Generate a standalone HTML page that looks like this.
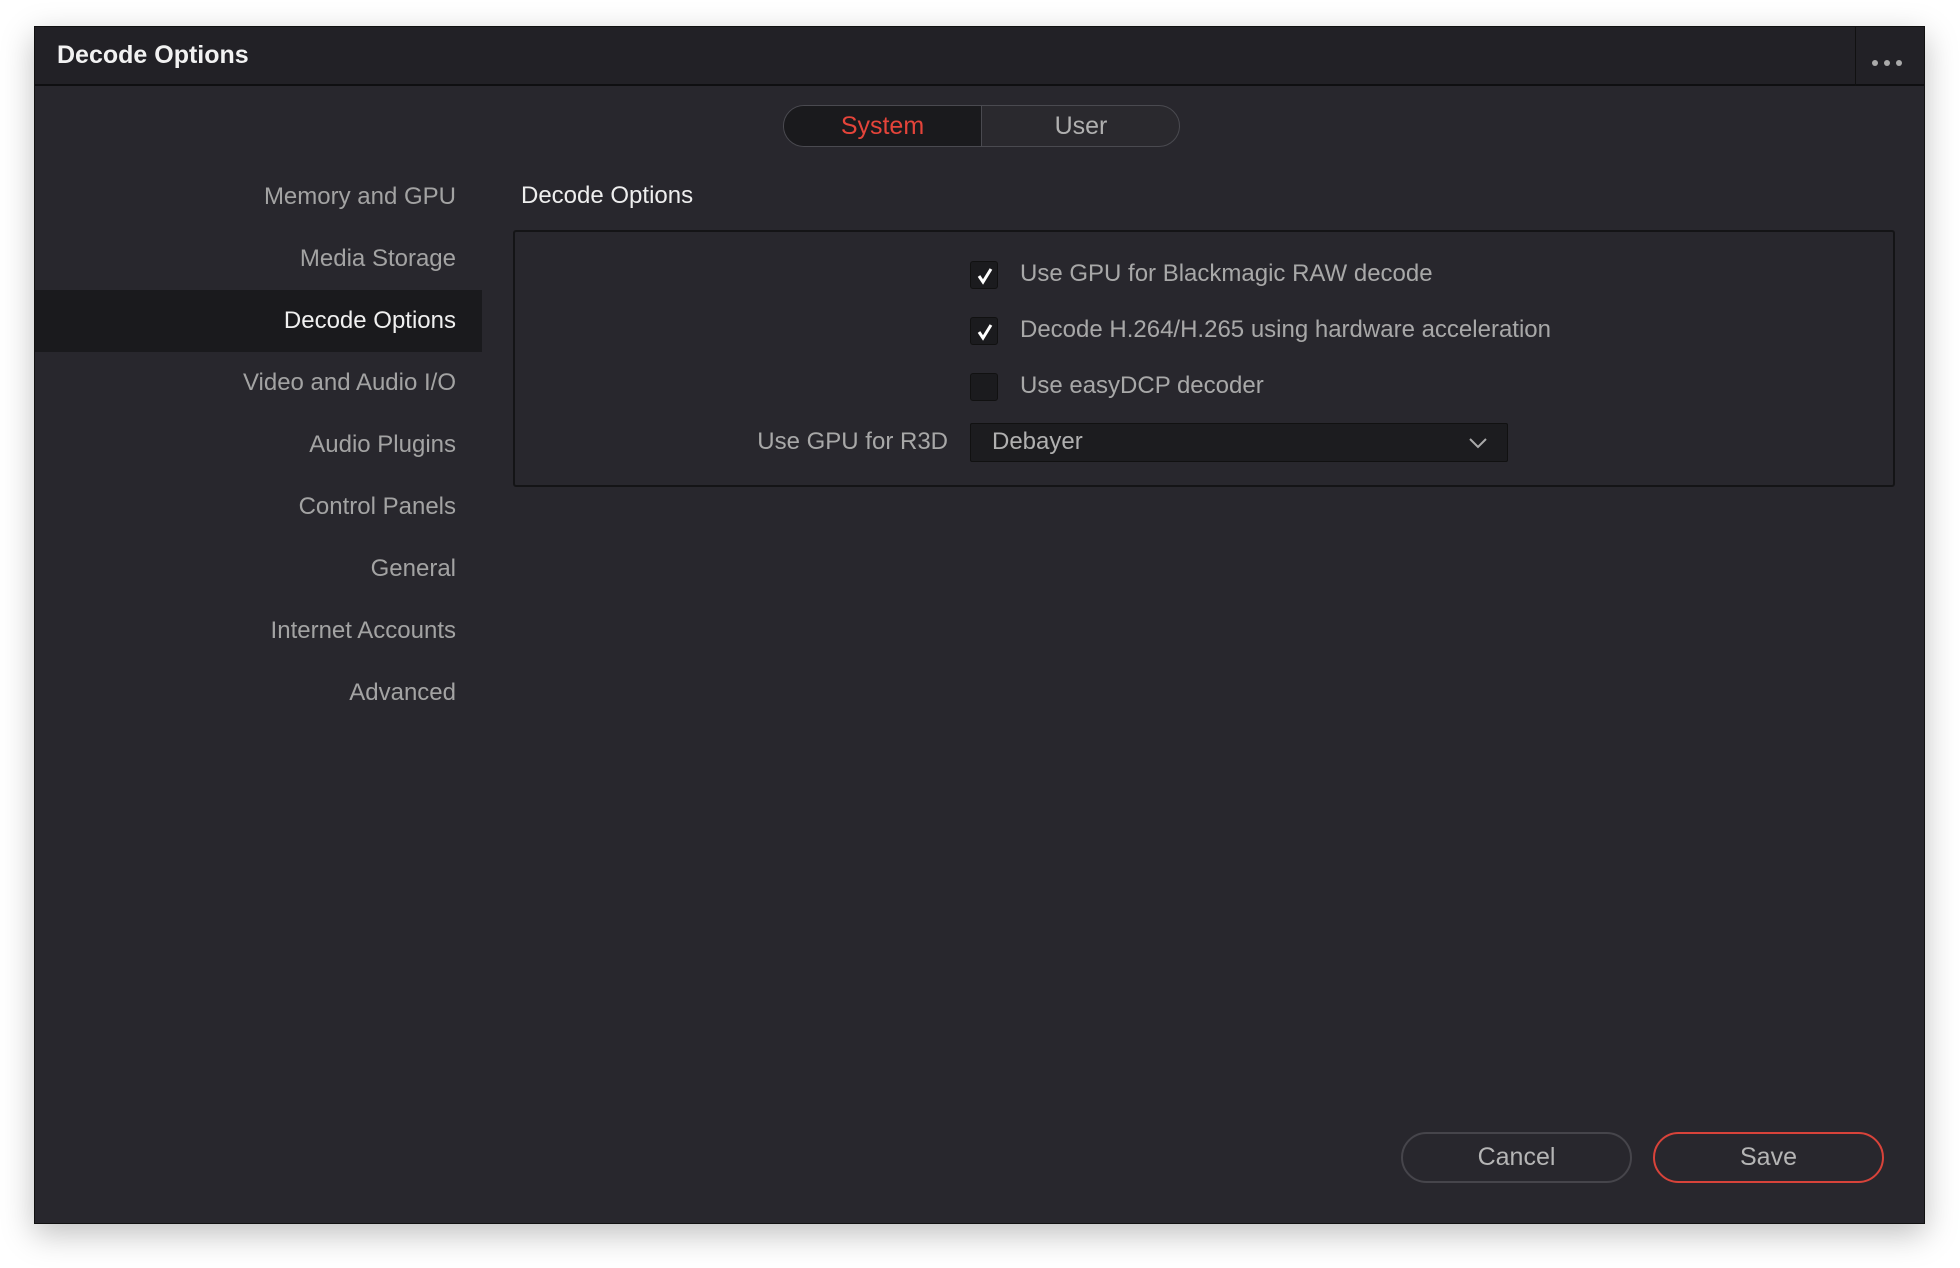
<!DOCTYPE html>
<html><head><meta charset="utf-8"><style>
*{box-sizing:border-box;margin:0;padding:0}
body{width:1960px;height:1268px;background:#fff;position:relative;overflow:hidden;font-family:"Liberation Sans",sans-serif;}
.win{position:absolute;left:34px;top:26px;width:1891px;height:1198px;background:#28272d;border:1px solid #111;box-shadow:0 10px 30px rgba(0,0,0,.25);}
.title{position:absolute;left:0;top:0;width:100%;height:59px;background:#222126;border-bottom:2px solid #0f0f11;}
.title .t{position:absolute;left:22px;top:14px;font-size:25px;font-weight:bold;color:#f2f2f2;}
.sep{position:absolute;left:1820px;top:0;width:1px;height:59px;background:#111;}
.dots{position:absolute;left:1837px;top:26px;}
.dots i{display:inline-block;width:6px;height:6px;border-radius:3px;background:#aaa;margin-right:6px;}
.seg{position:absolute;left:748px;top:78px;width:397px;height:42px;border:1px solid #4a4a50;border-radius:21px;overflow:hidden;background:#2a292e;}
.seg .a{position:absolute;left:0;top:0;width:198px;height:100%;background:#1a1a1d;border-right:1px solid #4a4a50;color:#e5443a;font-size:25px;text-align:center;line-height:40px;}
.seg .b{position:absolute;left:198px;top:0;width:198px;height:100%;color:#b0b0b0;font-size:25px;text-align:center;line-height:40px;}
.nav{position:absolute;left:0;width:447px;text-align:right;padding-right:26px;color:#a3a3a3;font-size:24px;height:62px;line-height:62px;}
.nav.sel{background:#1a1a1d;color:#f0f0f0;}
.hdr{position:absolute;left:486px;top:155px;color:#eee;font-size:24px;}
.box{position:absolute;left:478px;top:203px;width:1382px;height:257px;border:2px solid #141416;border-radius:3px;}
.cb{position:absolute;left:935px;width:28px;height:28px;background:#1b1b1e;border:1px solid #111;border-radius:3px;}
.lbl{position:absolute;left:985px;color:#a8a8a8;font-size:24px;}
.dd{position:absolute;left:935px;top:396px;width:538px;height:39px;background:#1c1c1f;border:1px solid #111;border-radius:2px;color:#b0b0b0;font-size:24px;line-height:36px;padding-left:21px;}
.btn{position:absolute;top:1105px;width:231px;height:51px;border-radius:26px;border:2px solid #46454b;color:#b5b5b5;font-size:25px;text-align:center;line-height:47px;}
</style></head><body>
<div class="win">
<div class="title"><div class="t">Decode Options</div><div class="sep"></div><div class="dots"><i></i><i></i><i></i></div></div>
<div class="seg"><div class="a">System</div><div class="b">User</div></div>
<div class="nav" style="top:139px">Memory and GPU</div>
<div class="nav" style="top:201px">Media Storage</div>
<div class="nav sel" style="top:263px">Decode Options</div>
<div class="nav" style="top:325px">Video and Audio I/O</div>
<div class="nav" style="top:387px">Audio Plugins</div>
<div class="nav" style="top:449px">Control Panels</div>
<div class="nav" style="top:511px">General</div>
<div class="nav" style="top:573px">Internet Accounts</div>
<div class="nav" style="top:635px">Advanced</div>
<div class="hdr">Decode Options</div>
<div class="box"></div>
<div class="cb" style="top:234px"><svg width="28" height="28"><path d="M8 14 L12 20 L20 7" stroke="#fff" stroke-width="3" fill="none"/></svg></div>
<div class="lbl" style="top:233px">Use GPU for Blackmagic RAW decode</div>
<div class="cb" style="top:290px"><svg width="28" height="28"><path d="M8 14 L12 20 L20 7" stroke="#fff" stroke-width="3" fill="none"/></svg></div>
<div class="lbl" style="top:289px">Decode H.264/H.265 using hardware acceleration</div>
<div class="cb" style="top:346px"></div>
<div class="lbl" style="top:345px">Use easyDCP decoder</div>
<div class="lbl" style="left:560px;top:401px;width:353px;text-align:right">Use GPU for R3D</div>
<div class="dd">Debayer<svg style="position:absolute;left:497px;top:12px" width="20" height="14"><path d="M2 3 L10 11 L18 3" stroke="#aaa" stroke-width="2" fill="none"/></svg></div>
<div class="btn" style="left:1366px">Cancel</div>
<div class="btn" style="left:1618px;border-color:#d8433a">Save</div>
</div>
</body></html>
